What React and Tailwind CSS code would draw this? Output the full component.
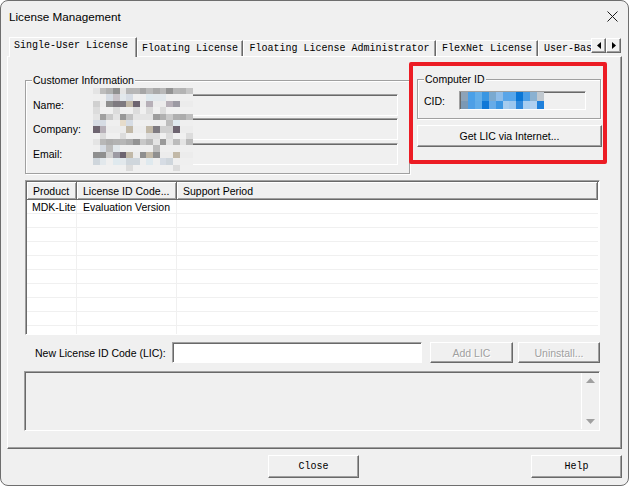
import React from "react";

const SANS = "font-['Liberation_Sans',Arial,sans-serif]";
const MONO = "font-['Liberation_Mono','Courier_New',monospace]";
const RAISED =
  "border border-t-white border-l-white border-r-[#696969] border-b-[#696969] shadow-[inset_-1px_-1px_0_#a0a0a0]";
const SUNKEN =
  "border border-t-[#a0a0a0] border-l-[#a0a0a0] border-r-white border-b-white shadow-[inset_1px_1px_0_#696969]";
const ETCHED =
  "border border-[#a0a0a0] shadow-[inset_1px_1px_0_#fff,1px_1px_0_#fff]";

function hash(r, c, s) {
  let x =
    Math.imul(r + 1, 374761393) ^
    Math.imul(c + 7, 668265263) ^
    Math.imul(s + 3, 1274126177);
  x = Math.imul(x ^ (x >>> 13), 1274126177);
  x ^= x >>> 16;
  return (x >>> 0) / 4294967296;
}

const ROW_TYPES = [
  "line", "tl", "td", "blank",
  "line", "tl", "td", "blank",
  "line", "tl", "td", "tl", "blank",
];
const DARK = ["#8f8f8f", "#a9a9a9", "#6d6470", "#c2b9a8", "#9c9aa3", "#b7b0b8", "#d0d0d0", "#7e7a80"];
const LIGHT = ["#d6dce4", "#c9c3c9", "#e2e8ec", "#cfd6dc", "#bdbdbd", "#e6dccb", "#dfe9ee"];

function CustomerMosaic() {
  const cells = [];
  ROW_TYPES.forEach((t, r) => {
    for (let c = 0; c < 15; c++) {
      const h = hash(r, c, 1);
      const p = hash(r, c, 2);
      let col = "#f0f0f0";
      if (t === "line") {
        if (c > 0 && h > 0.2) {
          const v = Math.floor(0x8c + p * 0x40);
          col = `rgb(${v},${v},${v})`;
        } else col = "#e4e4e4";
      } else if (t === "td") {
        if (c < 13 && h > 0.4) col = DARK[Math.floor(p * DARK.length)];
        else col = "#ececec";
      } else if (t === "tl") {
        if (c < 14 && h > 0.5) col = LIGHT[Math.floor(p * LIGHT.length)];
        else col = "#efefef";
      } else {
        col = h > 0.85 ? "#dcdcdc" : "#f0f0f0";
      }
      cells.push(<rect key={`${r}-${c}`} x={c} y={r} width="1" height="1" fill={col} />);
    }
  });
  return (
    <svg
      width="100"
      height="83"
      viewBox="0 0 15 13"
      preserveAspectRatio="none"
      shapeRendering="crispEdges"
      className="absolute left-0 top-[-6px]"
    >
      {cells}
    </svg>
  );
}

const CID_ROWS = [
  ["#8da3b8", "#4aa0e8", "#63aee9", "#3996e2", "#7aa9d0", "#8fbde9", "#5aa5e8", "#58a6ea", "#0a76d6", "#4a9de6", "#8ab1d1", "#c0c8cf"],
  ["#7b99b5", "#4d9fe6", "#60ace9", "#0f78d7", "#66abe8", "#3c96e3", "#a5cbee", "#9cc6ee", "#2f89dd", "#a7cdf0", "#b0d0f0", "#1f80db"],
];

function CidMosaic() {
  return (
    <svg width="83" height="17" viewBox="0 0 12 2" preserveAspectRatio="none" shapeRendering="crispEdges">
      {CID_ROWS.map((row, r) =>
        row.map((col, c) => <rect key={`${r}-${c}`} x={c} y={r} width="1" height="1" fill={col} />)
      )}
    </svg>
  );
}

function Field({ className = "" }) {
  return <div className={`w-[305px] h-[22px] bg-[#f0f0f0] ${SUNKEN} ${className}`} />;
}

function Tab({ w, children, left }) {
  return (
    <div
      className={`${w} h-[17px] shrink-0 pb-[1px] flex items-center ${left ? "pl-[5px]" : "justify-center"} bg-[#f0f0f0] border-t border-l border-r border-t-white border-l-white border-r-[#696969] shadow-[inset_-1px_0_0_#a0a0a0] whitespace-nowrap`}
    >
      {children}
    </div>
  );
}

export default function App() {
  const rows = Array.from({ length: 10 });
  return (
    <div
      className={`w-[629px] h-[486px] overflow-hidden rounded-[8px] border border-[#6e6e6e] bg-[#f0f0f0] flex flex-col text-black ${SANS} text-[10.5px] leading-[12px]`}
    >
      {/* Title bar */}
      <div className="h-[31px] shrink-0 flex items-center justify-between pl-[8px] pr-[10px]">
        <span className="text-[11.7px] leading-[14px]">License Management</span>
        <svg width="11" height="11" viewBox="0 0 11 11">
          <path d="M0.5 0.5 L10.5 10.5 M10.5 0.5 L0.5 10.5" stroke="#1b1b1b" strokeWidth="1" />
        </svg>
      </div>

      {/* Tab strip */}
      <div className={`mt-[5px] ml-[8px] h-[20px] flex items-start ${MONO} text-[10px] leading-[12px]`}>
        <div className="w-[582px] h-[20px] flex items-end overflow-hidden">
          <div className="relative z-10 w-[128px] h-[20px] shrink-0 pl-[4px] pt-[2px] bg-[#f0f0f0] border-t border-l border-r border-t-white border-l-white border-r-[#696969] shadow-[inset_-1px_0_0_#a0a0a0] whitespace-nowrap">
            Single-User License
          </div>
          <Tab w="w-[106px]">Floating License</Tab>
          <Tab w="w-[193px]">Floating License Administrator</Tab>
          <Tab w="w-[102px]">FlexNet License</Tab>
          <Tab w="w-[120px]" left>
            User-Bas
          </Tab>
        </div>
        <div className={`mt-[1px] w-[15px] h-[15px] ${RAISED} flex items-center justify-center`}>
          <svg width="4" height="7" viewBox="0 0 4 7">
            <polygon points="4,0 4,7 0,3.5" fill="#000" />
          </svg>
        </div>
        <div className={`mt-[1px] w-[15px] h-[15px] ${RAISED} flex items-center justify-center`}>
          <svg width="4" height="7" viewBox="0 0 4 7">
            <polygon points="0,0 0,7 4,3.5" fill="#000" />
          </svg>
        </div>
      </div>

      {/* Tab panel */}
      <div className="relative -mt-[1px] ml-[6px] w-[615px] h-[393px] shrink-0 flex flex-col pl-[17px] pt-[16px] border border-t-white border-l-white border-r-[#696969] border-b-[#696969] shadow-[inset_-1px_-1px_0_#a0a0a0]">
        {/* top row */}
        <div className="flex items-start">
          <fieldset className={`mt-[1px] w-[385px] h-[100px] ${ETCHED}`}>
            <legend className="ml-[6px] px-[1px] bg-[#f0f0f0] leading-[12px]">Customer Information</legend>
            <div className="flex pl-[7px] pt-[8px]">
              <div className="flex flex-col w-[60px]">
                <div className="h-[22px] flex items-center">Name:</div>
                <div className="mt-[2px] h-[22px] flex items-center">Company:</div>
                <div className="mt-[3px] h-[22px] flex items-center">Email:</div>
              </div>
              <div className="relative flex flex-col">
                <Field />
                <Field className="mt-[2px]" />
                <Field className="mt-[3px]" />
                <CustomerMosaic />
              </div>
            </div>
          </fieldset>

          <div className="ml-[7px] w-[185px] flex flex-col">
            <fieldset className={`w-[184px] h-[46px] ${ETCHED}`}>
              <legend className="ml-[6px] px-[1px] bg-[#f0f0f0] leading-[12px]">Computer ID</legend>
              <div className="flex items-center pl-[6px] pt-[6px]">
                <span className="w-[35px]">CID:</span>
                <div className={`w-[127px] h-[19px] bg-[#f0f0f0] ${SUNKEN} flex items-center pl-[1px]`}>
                  <CidMosaic />
                </div>
              </div>
            </fieldset>
            <div className={`mt-[6px] w-[185px] h-[22px] ${RAISED} flex items-center justify-center`}>
              Get LIC via Internet...
            </div>
          </div>
        </div>

        {/* list view */}
        <div className={`mt-[6px] w-[575px] h-[155px] shrink-0 bg-white overflow-hidden p-[1px] ${SUNKEN}`}>
          <div className="flex h-[18px] bg-[#f0f0f0]">
            <div className="w-[50px] pl-[6px] flex items-center border-r border-b border-r-[#696969] border-b-[#696969] shadow-[inset_1px_1px_0_#fff,inset_-1px_-1px_0_#a0a0a0]">
              Product
            </div>
            <div className="w-[100px] pl-[6px] flex items-center border-r border-b border-r-[#696969] border-b-[#696969] shadow-[inset_1px_1px_0_#fff,inset_-1px_-1px_0_#a0a0a0] whitespace-nowrap">
              License ID Code...
            </div>
            <div className="flex-1 pl-[6px] flex items-center border-r border-b border-r-[#696969] border-b-[#696969] shadow-[inset_1px_1px_0_#fff,inset_-1px_-1px_0_#a0a0a0]">
              Support Period
            </div>
          </div>
          {rows.map((_, i) => (
            <div key={i} className="flex h-[14px] border-b border-[#f0f0f0]">
              <div className="w-[50px] pl-[5px] flex items-center border-r border-[#f0f0f0]">
                {i === 0 ? "MDK-Lite" : ""}
              </div>
              <div className="w-[100px] pl-[6px] flex items-center border-r border-[#f0f0f0] whitespace-nowrap">
                {i === 0 ? "Evaluation Version" : ""}
              </div>
              <div className="flex-1" />
            </div>
          ))}
        </div>

        {/* LIC row */}
        <div className="mt-[7px] h-[21px] flex items-center">
          <span className="ml-[10px] w-[137px] whitespace-nowrap">New License ID Code (LIC):</span>
          <div className={`w-[250px] h-[21px] bg-white ${SUNKEN}`} />
          <div className={`ml-[8px] w-[83px] h-[21px] ${RAISED} flex items-center justify-center text-[#a0a0a0] [text-shadow:1px_1px_0_#fff]`}>
            Add LIC
          </div>
          <div className={`ml-[5px] w-[82px] h-[21px] ${RAISED} flex items-center justify-center text-[#a0a0a0] [text-shadow:1px_1px_0_#fff]`}>
            Uninstall...
          </div>
        </div>

        {/* message box */}
        <div className={`mt-[8px] -ml-[1px] w-[576px] h-[60px] p-[1px] flex justify-end ${SUNKEN}`}>
          <div className="w-[17px] h-full border-l border-white flex flex-col items-center justify-between py-[5px]">
            <svg width="9" height="5" viewBox="0 0 9 5">
              <polygon points="4.5,0 9,5 0,5" fill="#a0a0a0" />
            </svg>
            <svg width="9" height="5" viewBox="0 0 9 5">
              <polygon points="0,0 9,0 4.5,5" fill="#a0a0a0" />
            </svg>
          </div>
        </div>

        {/* red annotation */}
        <div className="absolute left-[401px] top-[5px] w-[198px] h-[102px] border-[4px] border-[#ec1c24] rounded-[2px]" />
      </div>

      {/* bottom buttons */}
      <div className={`mt-[6px] flex ${MONO} text-[10px]`}>
        <div className={`ml-[267px] w-[91px] h-[23px] ${RAISED} flex items-center justify-center`}>Close</div>
        <div className={`ml-auto mr-[6px] w-[91px] h-[23px] ${RAISED} flex items-center justify-center`}>Help</div>
      </div>
    </div>
  );
}
